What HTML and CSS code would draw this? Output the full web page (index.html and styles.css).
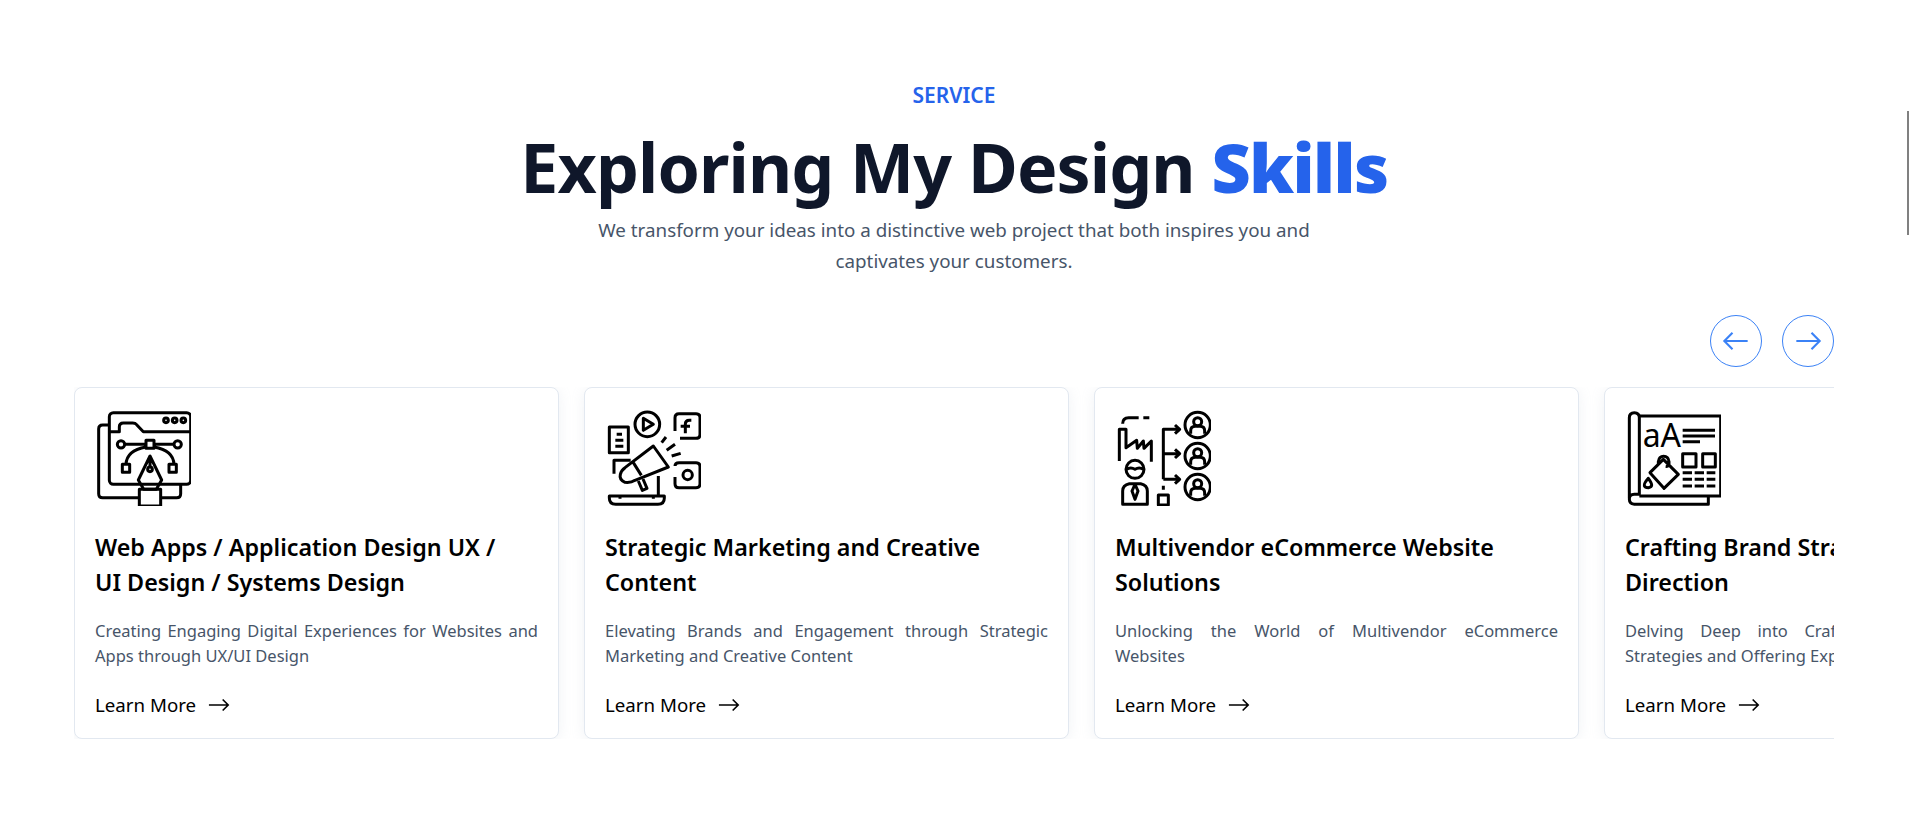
FILE: index.html
```html
<!DOCTYPE html>
<html lang="en">
<head>
    <meta charset="UTF-8">
    <meta name="viewport" content="width=device-width, initial-scale=1.0">
    <title>Service</title>
    <link rel="stylesheet" href="styles.css">
</head>
<body>
    <main class="service">
        <header class="service-head">
            <span class="eyebrow">SERVICE</span>
            <h1>Exploring My Design <em>Skills</em></h1>
            <p>We transform your ideas into a distinctive web project that both inspires you and captivates your customers.</p>
        </header>

        <div class="slider">
            <div class="slider-nav">
                <button class="nav-btn" aria-label="Previous">
                    <svg viewBox="0 0 24 24"><path d="M22 12H2M9 5l-7 7 7 7"/></svg>
                </button>
                <button class="nav-btn" aria-label="Next">
                    <svg viewBox="0 0 24 24"><path d="M2 12h20M15 5l7 7-7 7"/></svg>
                </button>
            </div>

            <div class="cards">
                <article class="card">
                    <svg class="card-icon" viewBox="15 27 288 288">
                        <rect x="58" y="35" width="244" height="215" rx="12"/>
                        <path d="M58 92h30V78q0-12 12-12h28q8 0 12 5l20 21h142"/>
                        <circle cx="228" cy="58" r="7"/><circle cx="254" cy="58" r="7"/><circle cx="280" cy="58" r="7"/>
                        <path d="M58 72H38q-12 0-12 12v194q0 12 12 12h108M212 290h48q12 0 12-12v-28"/>
                        <circle cx="93" cy="130" r="11"/><rect x="168" y="118" width="24" height="24"/><circle cx="263" cy="130" r="11"/>
                        <path d="M104 130h64M192 130h60M108 190q2-42 60-52M252 190q-2-42-60-52"/>
                        <rect x="97" y="190" width="22" height="24"/><rect x="237" y="190" width="22" height="24"/>
                        <path d="M180 165l-35 72 16 28h38l16-28zM180 165v33"/>
                        <circle cx="180" cy="205" r="7"/>
                        <rect x="148" y="265" width="64" height="50"/>
                    </svg>
                    <h2>Web Apps / Application Design UX /<br>UI Design / Systems Design</h2>
                    <p>Creating Engaging Digital Experiences for Websites and Apps through UX/UI Design</p>
                    <a class="more" href="#">Learn More <svg viewBox="0 0 24 14"><path d="M1 7h21M16 1l6 6-6 6"/></svg></a>
                </article>

                <article class="card">
                    <svg class="card-icon" viewBox="45 27 288 288">
                        <rect x="58" y="78" width="57" height="77"/>
                        <path d="M80 100h16M76 118h24M76 136h24"/>
                        <circle cx="172" cy="70" r="37"/>
                        <path d="M160 52l30 18-30 18z"/>
                        <path d="M255 90V50q0-12 12-12h51q12 0 12 12v50q0 12-12 12h-48M304 58h-6q-12 0-12 12v27M272 76h28"/>
                        <path d="M255 195q0-10 12-10h51q12 0 12 12v51q0 12-12 12h-51q-12 0-12-12v-20"/>
                        <circle cx="293" cy="222" r="14"/>
                        <path d="M215 125l13-17M230 148l25-18M245 165l27-8"/>
                        <path d="M190 135l45 63-100 40q-12 8-30 6-18-8-14-24 3-12 14-20zM130 185l24 38"/>
                        <path d="M145 240l12 28 14-6-12-28"/>
                        <path d="M72 218v-40h50M205 225v57"/>
                        <path d="M58 285h165v6q0 19-19 19H77q-19 0-19-19zM90 285v8M190 285v8"/>
                    </svg>
                    <h2>Strategic Marketing and Creative Content</h2>
                    <p>Elevating Brands and Engagement through Strategic Marketing and Creative Content</p>
                    <a class="more" href="#">Learn More <svg viewBox="0 0 24 14"><path d="M1 7h21M16 1l6 6-6 6"/></svg></a>
                </article>

                <article class="card">
                    <svg class="card-icon" viewBox="45 27 288 288">
                        <path d="M68 68q0-18 18-18h30M130 50h18"/>
                        <path d="M58 180V85h20v55l32-22 2 24 18-22 2 22 22-22v62"/>
                        <circle cx="105" cy="205" r="27"/>
                        <path d="M80 205q12-8 25 0 13-8 25 0"/>
                        <path d="M68 310v-40q0-18 20-22h34q20 4 20 22v40zM105 250l-9 20 9 25 9-25z"/>
                        <path d="M190 235V85h45M190 158h45M190 235h45M225 72l14 13-14 13M225 145l14 13-14 13M225 222l14 13-14 13M190 254v12"/>
                        <rect x="175" y="282" width="30" height="30"/>
                        <circle cx="293" cy="72" r="38"/>
                        <circle cx="293" cy="62" r="12"/>
                        <path d="M272 98V90q0-14 14-14h14q14 0 14 14v8"/>
                        <circle cx="293" cy="165" r="38"/>
                        <circle cx="293" cy="155" r="12"/>
                        <path d="M272 191v-8q0-14 14-14h14q14 0 14 14v8"/>
                        <circle cx="293" cy="258" r="38"/>
                        <circle cx="293" cy="248" r="12"/>
                        <path d="M272 284v-8q0-14 14-14h14q14 0 14 14v8"/>
                    </svg>
                    <h2>Multivendor eCommerce Website Solutions</h2>
                    <p>Unlocking the World of Multivendor eCommerce Websites</p>
                    <a class="more" href="#">Learn More <svg viewBox="0 0 24 14"><path d="M1 7h21M16 1l6 6-6 6"/></svg></a>
                </article>

                <article class="card">
                    <svg class="card-icon" viewBox="45 27 288 288">
                        <path d="M58 292V50q0-15 15-15t15 15v230H73q-15 0-15 14t15 16h222v-25"/>
                        <path d="M84 45h248v240H88"/>
                        <text class="icon-letters" x="98" y="138">aA</text>
                        <path d="M218 88h97M218 105h97M218 122h52"/>
                        <rect x="218" y="158" width="40" height="40"/><rect x="278" y="158" width="38" height="40"/>
                        <path class="dashes" d="M218 215h98M218 235h98M218 255h98"/>
                        <path d="M120 215l40-40 45 45-43 42zM145 190v-8q2-16 16-16t16 16-10 14"/>
                        <path d="M115 232q-14 16-12 22 2 6 12 6 10-2 10-8 0-6-10-20z"/>
                    </svg>
                    <h2>Crafting Brand Strategy and Creative Direction</h2>
                    <p>Delving Deep into Crafting Comprehensive Brand Strategies and Offering Expert Creative Direction</p>
                    <a class="more" href="#">Learn More <svg viewBox="0 0 24 14"><path d="M1 7h21M16 1l6 6-6 6"/></svg></a>
                </article>
            </div>
        </div>
    </main>
    <div class="scroll-thumb"></div>
</body>
</html>
```

FILE: styles.css
```css
* {
  box-sizing: border-box;
}

:root {
  --blue: #2563eb;
  --blue-light: #3b82f6;
  --ink: #0f172a;
  --muted: #475569;
  --line: #e2e8f0;
}

html,
body {
  height: 100%;
  overflow: hidden;
}

body {
  margin: 0;
  background: #fff;
  color: var(--ink);
  font-family: "Noto Sans", "Open Sans", sans-serif;
}

.service {
  padding: 80px 78px 0 74px;
}

.service-head {
  display: flex;
  flex-direction: column;
  align-items: center;
  text-align: center;
}

.eyebrow {
  color: var(--blue);
  font-size: 21px;
  font-weight: 600;
  line-height: 30px;
}

h1 {
  margin: 12px 0 0;
  font-size: 68px;
  font-weight: 700;
  letter-spacing: -0.9px;
  line-height: 90px;
}

h1 em {
  color: var(--blue);
  font-style: normal;
  font-weight: 900;
  letter-spacing: -1.5px;
}

.service-head p {
  width: 768px;
  margin: 3px 0 0;
  color: var(--muted);
  font-size: 18.8px;
  line-height: 31px;
}

.slider {
  margin-top: 38px;
}

.slider-nav {
  display: flex;
  justify-content: flex-end;
  gap: 20px;
  margin-bottom: 20px;
}

.nav-btn {
  display: flex;
  align-items: center;
  justify-content: center;
  width: 52px;
  height: 52px;
  padding: 0;
  background: #fff;
  border: 1px solid var(--blue-light);
  border-radius: 50%;
}

.nav-btn svg {
  width: 28px;
  height: 28px;
  fill: none;
  stroke: var(--blue-light);
  stroke-width: 1.8;
}

.cards {
  display: flex;
  gap: 25px;
  overflow: hidden;
}

.card {
  display: flex;
  flex: 0 0 485px;
  flex-direction: column;
  align-items: flex-start;
  height: 352px;
  padding: 22px 20px 0;
  background: #fff;
  border: 1px solid var(--line);
  border-radius: 8px;
  box-shadow: 0 2px 14px rgba(148, 163, 184, 0.14);
}

.card-icon {
  width: 96px;
  height: 96px;
  fill: none;
  stroke: #000;
  stroke-width: 9;
  stroke-linejoin: round;
}

.icon-letters {
  fill: #000;
  stroke: none;
  font-size: 96px;
  font-family: "Noto Sans", sans-serif;
}

.dashes {
  stroke-dasharray: 28 8;
}

.card h2 {
  margin: 24px 0 0;
  color: #000;
  font-size: 23.3px;
  font-weight: 600;
  line-height: 35px;
}

.card p {
  margin: 19px 0 0;
  color: var(--muted);
  font-size: 16.5px;
  line-height: 24.5px;
  text-align: justify;
}

.more {
  display: flex;
  align-items: center;
  gap: 12px;
  margin-top: 23px;
  color: #000;
  font-size: 18.7px;
  line-height: 27px;
  text-decoration: none;
}

.more svg {
  width: 22px;
  height: 14px;
  fill: none;
  stroke: #000;
  stroke-width: 1.8;
}

.scroll-thumb {
  position: fixed;
  top: 111px;
  right: 3px;
  width: 2px;
  height: 124px;
  background: #808080;
}
```
